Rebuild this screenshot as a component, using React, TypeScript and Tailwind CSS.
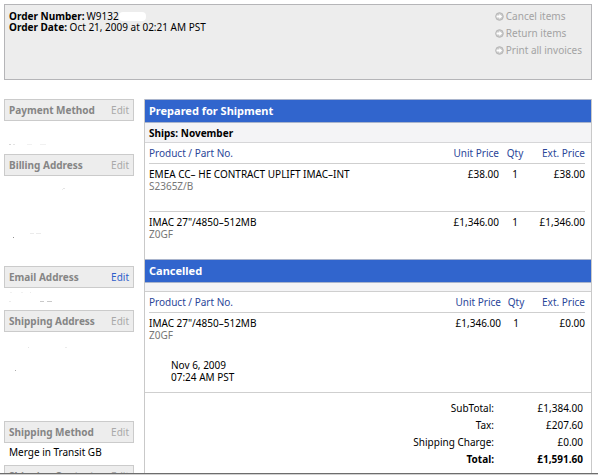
import React from "react";

type Item = { name: string; part: string; unit: string; qty: string; ext: string };

const prepared: Item[] = [
  { name: "EMEA CC– HE CONTRACT UPLIFT IMAC–INT", part: "S2365Z/B", unit: "£38.00", qty: "1", ext: "£38.00" },
  { name: 'IMAC 27"/4850–512MB', part: "Z0GF", unit: "£1,346.00", qty: "1", ext: "£1,346.00" },
];

const cancelled: Item[] = [
  { name: 'IMAC 27"/4850–512MB', part: "Z0GF", unit: "£1,346.00", qty: "1", ext: "£0.00" },
];

const totals = [
  { label: "SubTotal:", value: "£1,384.00" },
  { label: "Tax:", value: "£207.60" },
  { label: "Shipping Charge:", value: "£0.00" },
];

function ArrowIcon() {
  return (
    <svg viewBox="0 0 9 9" className="size-[9px] shrink-0" aria-hidden="true">
      <circle cx="4.5" cy="4.5" r="3.8" fill="#cacaca" stroke="#b6b6b6" strokeWidth="1" />
      <path d="M1.6 3.5H4.3V2L7.2 4.5L4.3 7V5.5H1.6Z" fill="#fff" />
    </svg>
  );
}

/* Faint leftovers of erased details: x, y, width, opacity */
function Specks({ marks }: { marks: number[][] }) {
  return (
    <svg className="block h-16 w-full" aria-hidden="true">
      {marks.map(([x, y, w, o]) => (
        <rect key={`${x}-${y}`} x={x} y={y} width={w} height="1" fill="#777" opacity={o} />
      ))}
    </svg>
  );
}

function SideSection({ title, active, height, children }: { title: string; active?: boolean; height: string; children?: React.ReactNode }) {
  return (
    <section className={`${height} overflow-hidden`}>
      <div className="flex h-[22px] items-center justify-between border border-[#cbcbcb] bg-[#ededed] pr-1 pl-1">
        <h2 className="font-bold text-[#858585]">{title}</h2>
        <button type="button" className={active ? "text-[#2f5fcb]" : "text-[#a9a9a9]"}>
          Edit
        </button>
      </div>
      {children}
    </section>
  );
}

function ItemTable({ items, qtyWidth, rowHeight }: { items: Item[]; qtyWidth: string; rowHeight: string }) {
  return (
    <div className="pr-[6px] pl-1">
      <table className="w-full table-fixed border-collapse">
        <colgroup>
          <col />
          <col className="w-[62px]" />
          <col className={qtyWidth} />
          <col className="w-[54px]" />
        </colgroup>
        <thead>
          <tr className="h-5 border-b border-[#cfcfcf] text-[#2b4699]">
            <th className="text-left font-normal">Product / Part No.</th>
            <th className="text-right font-normal">Unit Price</th>
            <th className="text-center font-normal">Qty</th>
            <th className="text-right font-normal">Ext. Price</th>
          </tr>
        </thead>
        <tbody>
          {items.map((item) => (
            <tr key={item.name} className={`${rowHeight} border-b border-[#cfcfcf] align-top last:border-b-0`}>
              <td className="pt-1">
                {item.name}
                <div className="text-[#777]">{item.part}</div>
              </td>
              <td className="pt-1 text-right">{item.unit}</td>
              <td className="pt-1 text-center">{item.qty}</td>
              <td className="pt-1 text-right">{item.ext}</td>
            </tr>
          ))}
        </tbody>
      </table>
    </div>
  );
}

function Banner({ children }: { children: React.ReactNode }) {
  return (
    <h2 className="flex h-6 items-center border-y border-[#a9b4cc] bg-[#3165cd] pl-1 text-[11px] font-bold text-white">
      {children}
    </h2>
  );
}

export default function App() {
  return (
    <div className="flex h-screen flex-col bg-white font-['Noto_Sans','Lucida_Grande',sans-serif] text-[10px] leading-[12px] text-black">
      <div className="min-h-0 flex-1 overflow-hidden border-b border-[#6d6d6d] pt-1 pr-[6px] pl-1">
        <header className="flex h-[76px] justify-between border border-[#b5b5b8] bg-[#ededed] pt-[5px] pr-[9px] pl-1">
          <div className="pt-px leading-[11px]">
            <p className="flex items-center">
              <b>Order Number:</b>
              <span className="ml-[2px]">W9132</span>
              <span className="h-[9px] w-[27px] rounded-sm bg-white" />
            </p>
            <p>
              <b>Order Date:</b> Oct 21, 2009 at 02:21 AM PST
            </p>
          </div>
          <ul className="flex flex-col gap-[5px] text-[#a3a3a3]">
            {["Cancel items", "Return items", "Print all invoices"].map((label) => (
              <li key={label}>
                <a href="#" className="flex items-center gap-[2px]">
                  <ArrowIcon />
                  {label}
                </a>
              </li>
            ))}
          </ul>
        </header>

        <div className="mt-[19px] flex gap-[10px]">
          <aside className="w-[130px] shrink-0">
            <SideSection title="Payment Method" height="h-[55px]">
              <Specks marks={[[5, 23, 2, 0.3], [9, 23, 2, 0.2], [23, 23, 5, 0.1], [36, 23, 6, 0.1]]} />
            </SideSection>
            <SideSection title="Billing Address" height="h-28">
              <Specks marks={[[59, 12, 2, 0.2], [58, 13, 1, 0.15], [9, 61, 1, 0.8], [26, 57, 4, 0.15], [32, 57, 5, 0.15]]} />
            </SideSection>
            <SideSection title="Email Address" height="h-11" active>
              <Specks marks={[[6, 4, 2, 0.1], [17, 4, 2, 0.1], [26, 4, 1, 0.15], [5, 13, 2, 0.15], [36, 13, 4, 0.4], [43, 13, 5, 0.4]]} />
            </SideSection>
            <SideSection title="Shipping Address" height="h-[111px]">
              <Specks marks={[[24, 15, 1, 0.2], [61, 15, 2, 0.15], [11, 38, 1, 0.6]]} />
            </SideSection>
            <SideSection title="Shipping Method" height="h-11">
              <p className="pt-[3px] pl-[5px]">Merge in Transit GB</p>
            </SideSection>
            <SideSection title="Shipping Contact" height="h-11" />
          </aside>

          <main className="min-w-0 flex-1 border-x border-[#c9c9c9]">
            <Banner>Prepared for Shipment</Banner>
            <p className="flex h-5 items-center border-b border-[#d6d6d8] bg-[#f4f4f6] pl-1 font-bold">Ships: November</p>
            <ItemTable items={prepared} qtyWidth="w-8" rowHeight="h-12" />
            <Banner>Cancelled</Banner>
            <div className="h-[9px] border-b border-[#cfcfcf] bg-[#f4f4f6]" />
            <ItemTable items={cancelled} qtyWidth="w-[30px]" rowHeight="h-[47px]" />
            <p className="h-[33px] pl-[26px]">
              Nov 6, 2009
              <br />
              07:24 AM PST
            </p>
            <div className="border-t border-[#cfcfcf] pt-[6px] pr-2 pb-4">
              <table className="ml-auto">
                <tbody>
                  {totals.map((row) => (
                    <tr key={row.label} className="h-[17px]">
                      <th className="text-right font-normal">{row.label}</th>
                      <td className="w-[89px] text-right">{row.value}</td>
                    </tr>
                  ))}
                  <tr className="h-[17px] font-bold">
                    <th className="text-right">Total:</th>
                    <td className="w-[89px] text-right">£1,591.60</td>
                  </tr>
                </tbody>
              </table>
            </div>
          </main>
        </div>
      </div>
      <div className="h-px bg-[#d0d0d0]" />
    </div>
  );
}
